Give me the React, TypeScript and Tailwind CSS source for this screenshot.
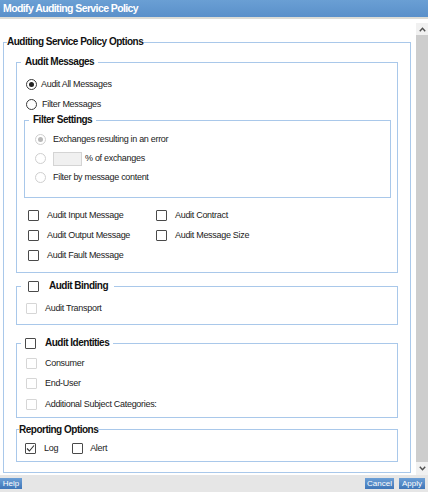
import React from 'react';

// small form controls drawn with css
function Radio({ checked = false, disabled = false }: { checked?: boolean; disabled?: boolean }) {
  return (
    <span
      className={`flex h-[11px] w-[11px] shrink-0 items-center justify-center rounded-full border bg-white ${
        disabled ? 'border-[#cfcfcf]' : 'border-[#3a3a3a]'
      }`}
    >
      {checked && (
        <span className={`h-[5px] w-[5px] rounded-full ${disabled ? 'bg-[#b8b8b8]' : 'bg-[#222]'}`} />
      )}
    </span>
  );
}

function Box({ checked = false, disabled = false }: { checked?: boolean; disabled?: boolean }) {
  return (
    <span
      className={`flex h-[11px] w-[11px] shrink-0 items-center justify-center rounded-[1px] border bg-white ${
        disabled ? 'border-[#d6d6d6]' : 'border-[#4a4a4a]'
      }`}
    >
      {checked && (
        <svg width="9" height="9" viewBox="0 0 9 9">
          <path d="M1 4.5 L3.4 7 L8 1.5" fill="none" stroke="#333" strokeWidth="1.1" />
        </svg>
      )}
    </span>
  );
}

const label = 'text-[9px] tracking-[-0.3px] text-[#222] leading-none';
const legendText = 'text-[10px] font-bold tracking-[-0.5px] text-[#111] leading-[12px]';
const border = 'border border-[#a9c8ea]';

export default function App() {
  return (
    <div className="flex h-[492px] w-[428px] flex-col overflow-hidden bg-white font-['Liberation_Sans',Arial,sans-serif]">
      {/* title bar */}
      <div className="flex h-[19px] shrink-0 items-center border-b-2 border-[#dcdcd6] bg-gradient-to-b from-[#6a9fd4] to-[#5a90ca] pl-[3px]">
        <span className="text-[10.5px] font-bold leading-none tracking-[-0.6px] text-white">Modify Auditing Service Policy</span>
      </div>

      {/* body */}
      <div className="flex min-h-0 flex-1">
        <div className="w-[416px] shrink-0 pl-[3px] pt-[17px]">
          <fieldset className={`w-[408px] px-[12px] pb-[10px] pt-[8px] ${border}`}>
            <legend className={`-ml-[9px] ${legendText}`}>Auditing Service Policy Options</legend>

            {/* Audit Messages */}
            <fieldset className={`pb-[7px] pt-[6px] ${border}`}>
              <legend className={`ml-[4px] px-[4px] ${legendText}`}>Audit Messages</legend>
              <div className="flex h-[20px] items-center gap-[4px] pl-[9px]">
                <Radio checked />
                <span className={label}>Audit All Messages</span>
              </div>
              <div className="flex h-[20px] items-center gap-[5px] pl-[9px]">
                <Radio />
                <span className={label}>Filter Messages</span>
              </div>

              <fieldset className={`ml-[7px] mr-[6px] pb-[10px] pt-[4px] ${border}`}>
                <legend className={`ml-[4px] px-[4px] ${legendText}`}>Filter Settings</legend>
                <div className="flex h-[19px] items-center gap-[7px] pl-[10px]">
                  <Radio checked disabled />
                  <span className={label}>Exchanges resulting in an error</span>
                </div>
                <div className="flex h-[19px] items-center gap-[7px] pl-[10px]">
                  <Radio disabled />
                  <span className="h-[14px] w-[29px] border border-[#d4d4d4] bg-[#f0f0f0]" />
                  <span className={`-ml-[4px] ${label}`}>% of exchanges</span>
                </div>
                <div className="flex h-[19px] items-center gap-[7px] pl-[10px]">
                  <Radio disabled />
                  <span className={label}>Filter by message content</span>
                </div>
              </fieldset>

              <div className="mt-[7px] grid grid-cols-[128px_1fr] pl-[11px]">
                <div className="flex h-[20px] items-center gap-[8px]">
                  <Box />
                  <span className={label}>Audit Input Message</span>
                </div>
                <div className="flex h-[20px] items-center gap-[8px]">
                  <Box />
                  <span className={label}>Audit Contract</span>
                </div>
                <div className="flex h-[20px] items-center gap-[8px]">
                  <Box />
                  <span className={label}>Audit Output Message</span>
                </div>
                <div className="flex h-[20px] items-center gap-[8px]">
                  <Box />
                  <span className={label}>Audit Message Size</span>
                </div>
                <div className="flex h-[20px] items-center gap-[8px]">
                  <Box />
                  <span className={label}>Audit Fault Message</span>
                </div>
              </div>
            </fieldset>

            {/* Audit Binding */}
            <fieldset className={`mt-[6px] pb-[6px] pt-[5px] ${border}`}>
              <legend className="ml-[4px] pl-[7px] pr-[6px]">
                <span className="flex h-[14px] items-center gap-[10px]">
                  <Box />
                  <span className={legendText}>Audit Binding</span>
                </span>
              </legend>
              <div className="flex h-[20px] items-center gap-[8px] pl-[9px]">
                <Box disabled />
                <span className={label}>Audit Transport</span>
              </div>
            </fieldset>

            {/* Audit Identities */}
            <fieldset className={`mt-[11px] pb-[2px] pt-[3px] ${border}`}>
              <legend className="ml-[4px] pl-[4px] pr-[4px]">
                <span className="flex h-[14px] items-center gap-[9px]">
                  <Box />
                  <span className={legendText}>Audit Identities</span>
                </span>
              </legend>
              <div className="flex h-[20.5px] items-center gap-[8px] pl-[9px]">
                <Box disabled />
                <span className={label}>Consumer</span>
              </div>
              <div className="flex h-[20.5px] items-center gap-[8px] pl-[9px]">
                <Box disabled />
                <span className={label}>End-User</span>
              </div>
              <div className="flex h-[20.5px] items-center gap-[8px] pl-[9px]">
                <Box disabled />
                <span className={label}>Additional Subject Categories:</span>
              </div>
            </fieldset>

            {/* Reporting Options */}
            <fieldset className={`mt-[6px] pb-[2px] pt-[3px] ${border}`}>
              <legend className={`ml-[2px] ${legendText}`}>Reporting Options</legend>
              <div className="flex h-[20px] items-center pl-[8px]">
                <Box checked />
                <span className={`ml-[8px] ${label}`}>Log</span>
                <span className="ml-[14px]">
                  <Box />
                </span>
                <span className={`ml-[7px] ${label}`}>Alert</span>
              </div>
            </fieldset>
          </fieldset>
        </div>

        {/* scrollbar */}
        <div className="mt-[4px] flex w-[12px] shrink-0 flex-col">
          <div className="flex h-[12px] items-center justify-center bg-[#f1f1f1]">
            <svg width="7" height="5" viewBox="0 0 7 5">
              <path d="M0.8 4.2 L3.5 1.2 L6.2 4.2" fill="none" stroke="#505050" strokeWidth="1.4" />
            </svg>
          </div>
          <div className="flex-1 bg-[#cdcdcd]" />
          <div className="flex h-[13px] items-center justify-center bg-[#f1f1f1]">
            <svg width="7" height="5" viewBox="0 0 7 5">
              <path d="M0.8 0.8 L3.5 3.8 L6.2 0.8" fill="none" stroke="#505050" strokeWidth="1.4" />
            </svg>
          </div>
        </div>
      </div>

      {/* footer */}
      <div className="flex h-[17px] shrink-0 items-center bg-[#e6e6e6] pr-[3px]">
        <button className="flex h-[11px] w-[22px] items-center justify-center bg-gradient-to-b from-[#6c9fd6] to-[#3f76b8] text-[8px] leading-none text-white">
          Help
        </button>
        <div className="ml-auto flex gap-[5px]">
          <button className="flex h-[11px] w-[29px] items-center justify-center bg-gradient-to-b from-[#6c9fd6] to-[#3f76b8] text-[8px] leading-none text-white">
            Cancel
          </button>
          <button className="flex h-[11px] w-[26px] items-center justify-center bg-gradient-to-b from-[#6c9fd6] to-[#3f76b8] text-[8px] leading-none text-white">
            Apply
          </button>
        </div>
      </div>
    </div>
  );
}
